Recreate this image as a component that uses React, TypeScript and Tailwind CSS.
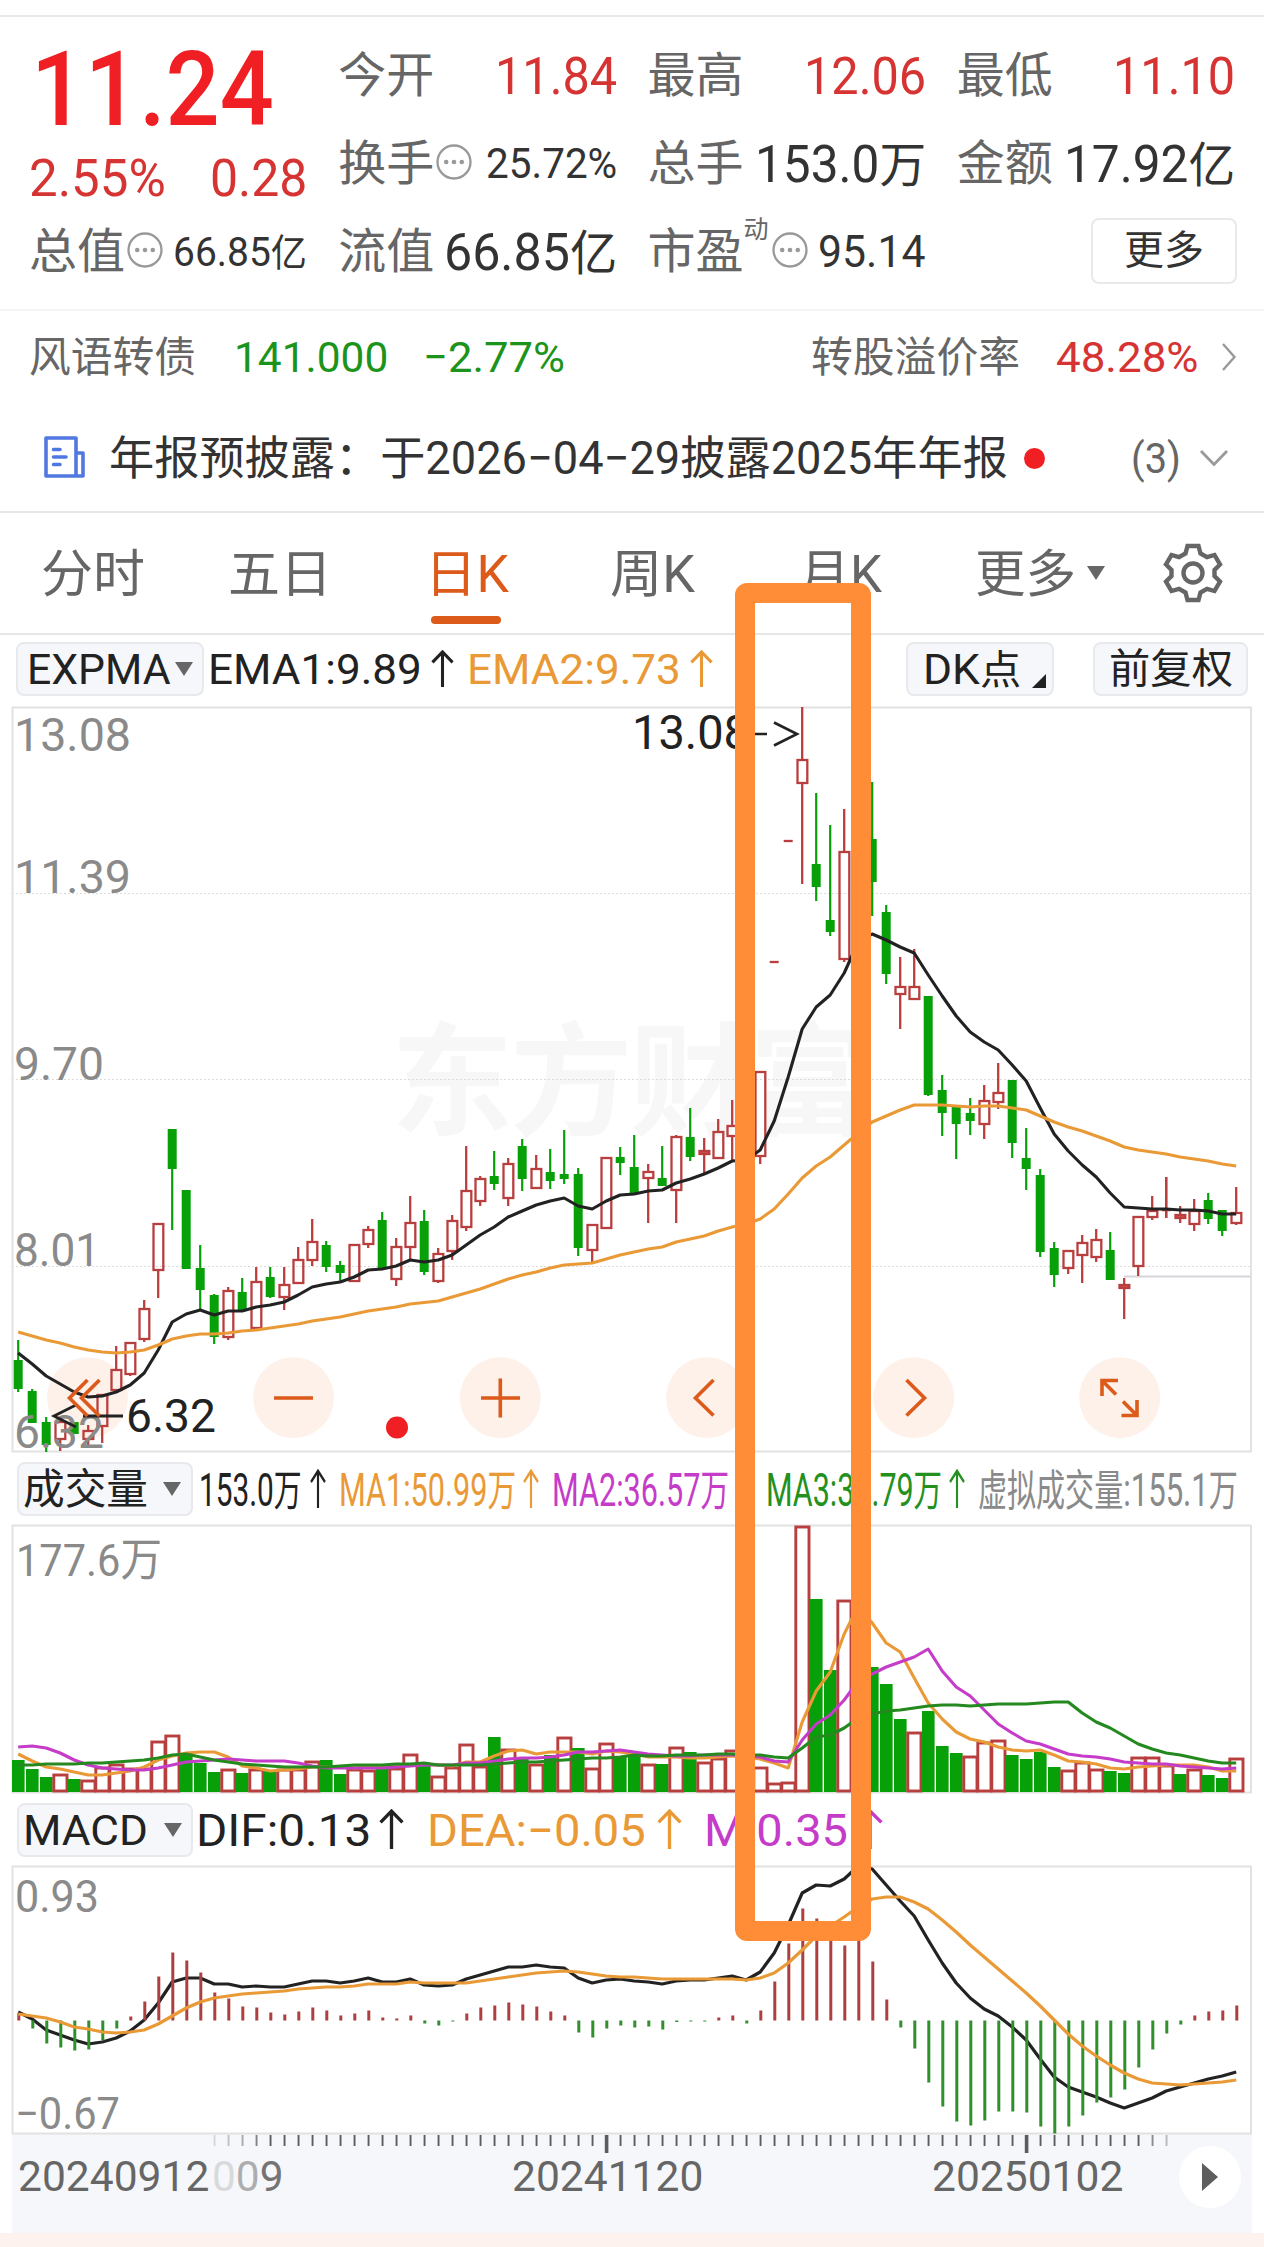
import React, { useLayoutEffect, useRef, useState } from "react";

const FONT = "font-[Roboto,'Noto_Sans_CJK_SC',sans-serif]";

/** One line of text squeezed or stretched to the width of its box. */
function Fit({ className = "", children }: { className?: string; children: React.ReactNode }) {
  const outer = useRef<HTMLSpanElement>(null);
  const inner = useRef<HTMLSpanElement>(null);
  const [scale, setScale] = useState(1);
  useLayoutEffect(() => {
    if (outer.current && inner.current) {
      setScale(outer.current.clientWidth / inner.current.offsetWidth);
    }
  }, [children]);
  return (
    <span ref={outer} className={`block shrink-0 pt-[2px] whitespace-nowrap leading-none ${className}`}>
      <span ref={inner} className="inline-block origin-left leading-none" style={{ transform: `scaleX(${scale})` }}>
        {children}
      </span>
    </span>
  );
}

const MoreDots = ({ className = "" }: { className?: string }) => (
  <svg className={`h-9 w-9 shrink-0 ${className}`} viewBox="0 0 36 36" fill="none">
    <circle cx="18" cy="18" r="16.5" stroke="#999" strokeWidth="2.3" />
    <circle cx="10.2" cy="18" r="2.3" fill="#999" />
    <circle cx="18" cy="18" r="2.3" fill="#999" />
    <circle cx="25.8" cy="18" r="2.3" fill="#999" />
  </svg>
);

const ArrowUp = ({ className = "" }: { className?: string }) => (
  <svg className={`shrink-0 ${className}`} viewBox="0 0 24 40" preserveAspectRatio="none" fill="none" stroke="currentColor" strokeWidth="3.2">
    <path d="M12 39V2M1.5 13L12 2L22.5 13" />
  </svg>
);

const Caret = ({ className = "" }: { className?: string }) => (
  <svg className={`h-[14px] w-[18px] shrink-0 ${className}`} viewBox="0 0 18 14" fill="#666">
    <path d="M0 0H18L9 14Z" />
  </svg>
);

const Gear = () => (
  <svg className="h-[62px] w-[62px]" viewBox="-31 -31 62 62" fill="none" stroke="#666" strokeWidth="4.4">
    <path d="M-5.5 -27H5.5L7.5 -19.5L14 -15.8L21.5 -18L27 -8.5L21.5 -3V3L27 8.5L21.5 18L14 15.8L7.5 19.5L5.5 27H-5.5L-7.5 19.5L-14 15.8L-21.5 18L-27 8.5L-21.5 3V-3L-27 -8.5L-21.5 -18L-14 -15.8L-7.5 -19.5Z" />
    <circle r="9.5" />
  </svg>
);

const X0 = 18.2;
const STEP = 14;
const cx = (i: number) => X0 + STEP * i;
const RED = "#b93f3f";
const GREEN = "#08a008";
const path = (ys: number[]) => ys.map((y, i) => `${i ? "L" : "M"}${cx(i).toFixed(1)} ${y}`).join("");

// [rising, high, body top, body bottom, low, filled]
type Candle = [number, number, number, number, number, number?];
const candles: (Candle | null)[] = [
  [0, 1340, 1360, 1389, 1392], [0, 1389, 1391, 1423, 1423], [0, 1417, 1422, 1445, 1452], [1, 1420, 1422, 1439, 1451],
  [0, 1422, 1422, 1434, 1434], [1, 1425, 1431, 1439, 1445], [1, 1394, 1395, 1426, 1443], [1, 1346, 1370, 1390, 1391],
  [1, 1343, 1343, 1374, 1376], [1, 1300, 1309, 1339, 1342], [1, 1224, 1224, 1270, 1298], [0, 1129, 1129, 1169, 1230],
  [0, 1190, 1190, 1269, 1269], [0, 1245, 1268, 1290, 1310], [0, 1294, 1295, 1337, 1344], [1, 1287, 1291, 1337, 1340],
  [0, 1278, 1292, 1311, 1312], [1, 1267, 1282, 1328, 1328], [0, 1267, 1277, 1297, 1298], [1, 1267, 1285, 1297, 1310],
  [1, 1247, 1260, 1283, 1283], [1, 1219, 1242, 1260, 1266], [0, 1241, 1245, 1267, 1272], [0, 1261, 1265, 1273, 1282],
  [1, 1244, 1245, 1281, 1281], [1, 1226, 1230, 1244, 1248], [0, 1212, 1220, 1269, 1269], [1, 1238, 1247, 1279, 1286],
  [1, 1196, 1223, 1247, 1260], [0, 1210, 1221, 1272, 1275], [1, 1248, 1254, 1281, 1283], [1, 1215, 1221, 1251, 1260],
  [1, 1146, 1191, 1227, 1231], [1, 1176, 1179, 1201, 1206], [0, 1151, 1176, 1184, 1190], [1, 1158, 1164, 1198, 1206],
  [0, 1139, 1146, 1179, 1191], [1, 1155, 1169, 1188, 1188], [0, 1149, 1172, 1181, 1189], [0, 1130, 1174, 1179, 1184],
  [0, 1168, 1174, 1248, 1256], [1, 1225, 1225, 1250, 1262], [1, 1158, 1158, 1228, 1228], [0, 1147, 1157, 1163, 1175],
  [0, 1135, 1167, 1194, 1194], [1, 1164, 1172, 1178, 1223], [0, 1146, 1178, 1186, 1186], [1, 1135, 1137, 1190, 1223],
  [0, 1108, 1137, 1157, 1161], [1, 1138, 1151, 1154, 1174, 1], [1, 1119, 1132, 1158, 1158], [1, 1100, 1126, 1136, 1160],
  null, [1, 1072, 1072, 1156, 1164], [1, 961, 961, 961, 961, 1], [1, 840, 840, 840, 840, 1],
  [1, 707, 760, 783, 884], [0, 793, 864, 887, 901], [0, 825, 920, 932, 936], [1, 809, 852, 959, 962],
  null, [0, 782, 839, 882, 916], [0, 905, 912, 974, 984], [1, 957, 987, 994, 1029],
  [1, 949, 987, 999, 999], [0, 996, 996, 1095, 1096], [0, 1075, 1090, 1113, 1136], [0, 1106, 1106, 1124, 1159],
  [0, 1098, 1113, 1121, 1135], [1, 1085, 1101, 1124, 1139], [1, 1063, 1093, 1102, 1109], [0, 1080, 1080, 1143, 1158],
  [0, 1128, 1158, 1169, 1190], [0, 1169, 1175, 1252, 1257], [0, 1242, 1248, 1275, 1287], [1, 1251, 1251, 1268, 1274],
  [1, 1235, 1243, 1255, 1283], [1, 1229, 1240, 1257, 1262], [0, 1232, 1250, 1280, 1280], [1, 1278, 1285, 1288, 1319, 1],
  [1, 1216, 1217, 1266, 1276], [1, 1196, 1211, 1217, 1220], [1, 1177, 1209, 1209, 1218], [1, 1206, 1215, 1218, 1223, 1],
  [1, 1199, 1211, 1224, 1231], [0, 1193, 1200, 1219, 1224], [0, 1210, 1210, 1231, 1236], [1, 1187, 1213, 1223, 1225],
];

const ema1 = [
  1353, 1364, 1376, 1384, 1392, 1397, 1396, 1392, 1385, 1373, 1350, 1322, 1314, 1310, 1315, 1311, 1311, 1307, 1305, 1302,
  1295, 1287, 1284, 1282, 1277, 1270, 1269, 1266, 1260, 1262, 1260, 1255, 1245, 1235, 1227, 1217, 1211, 1205, 1201, 1198,
  1206, 1209, 1201, 1195, 1194, 1191, 1190, 1183, 1179, 1174, 1168, 1161, 1160, 1150, 1121, 1077, 1029, 1007, 995, 973,
  942, 934, 940, 947, 953, 975, 996, 1016, 1032, 1042, 1050, 1065, 1081, 1108, 1134, 1151, 1165, 1177, 1193, 1207,
  1208, 1209, 1209, 1210, 1210, 1211, 1214, 1214,
];
const ema2 = [
  1332, 1336, 1340, 1343, 1347, 1350, 1352, 1353, 1352, 1350, 1345, 1339, 1336, 1334, 1334, 1333, 1331, 1330, 1328, 1326,
  1324, 1321, 1319, 1317, 1314, 1311, 1309, 1307, 1304, 1302.5, 1301, 1297, 1293, 1289, 1284, 1279, 1275, 1272, 1268, 1265,
  1264, 1263, 1259, 1255, 1252, 1249, 1247, 1242, 1239, 1236, 1231, 1227, 1224, 1219, 1209, 1194, 1178, 1166, 1157, 1145,
  1133, 1122, 1116, 1110, 1105, 1105, 1105, 1106, 1107, 1106, 1106, 1108, 1110, 1116, 1122, 1127, 1131, 1136, 1141, 1147,
  1150, 1152, 1154, 1157, 1159, 1161, 1164, 1166,
];

// Top edge of each volume bar; a negative value marks a falling day.
const volume = [
  -1760, -1769, -1777, 1774, -1779, 1780, 1767, 1764, 1768, 1768, 1741, 1735, -1755, -1763, -1772, 1769, -1773, 1769, -1771, 1769,
  1769, 1761, -1760, -1774, 1769, 1770, -1769, 1768, 1754, -1763, 1776, 1767, 1744, 1766, -1737, 1749, -1759, 1764, -1755, 1737,
  -1748, 1768, 1743, -1756, -1756, 1764, -1764, 1747, -1752, 1762, 1758, 1750, 1757, 1767, 1783, 1782, 1526, -1599, -1670, 1600,
  -1640, -1667, -1684, -1719, 1732, -1711, -1746, -1753, 1756, 1742, 1740, -1755, -1759, -1752, -1767, 1770, 1762, 1769, -1771, -1773,
  1757, 1757, 1765, -1774, 1769, -1775, -1778, 1758,
];
const ma1 = [
  1754, 1761, 1767, 1769, 1772, 1775, 1775, 1773, 1771, 1767, 1760, 1756, 1753, 1752, 1752, 1757, 1766, 1768, 1771, 1770,
  1769, 1767, 1767, 1767, 1768, 1767, 1767, 1766, 1765, 1764, 1765, 1766, 1762, 1762, 1756, 1751, 1750, 1754, 1752, 1752,
  1752, 1754, 1751, 1752, 1754, 1757, 1757, 1757, 1758, 1758, 1757, 1756, 1757, 1759, 1763, 1768, 1722, 1691, 1672, 1634,
  1606, 1623, 1643, 1652, 1678, 1703, 1719, 1732, 1739, 1742, 1747, 1750, 1751, 1750, 1755, 1761, 1762, 1764, 1768, 1769,
  1767, 1766, 1765, 1765, 1765, 1767, 1771, 1771,
];
const ma2 = [
  1747, 1746, 1748, 1753, 1760, 1765, 1768, 1769, 1770, 1770, 1768, 1765, 1762, 1761, 1760, 1759, 1760, 1761, 1761, 1761,
  1763, 1766, 1768, 1768, 1768, 1768, 1768, 1767, 1766, 1765, 1765, 1765, 1763, 1763, 1761, 1759, 1758, 1758, 1757, 1755,
  1752, 1752, 1751, 1750, 1752, 1754, 1755, 1756, 1756, 1755, 1755, 1755, 1756, 1757, 1761, 1762, 1740, 1724, 1715, 1700,
  1681, 1674, 1667, 1662, 1657, 1649, 1671, 1687, 1696, 1710, 1724, 1733, 1741, 1744, 1749, 1754, 1756, 1757, 1759, 1762,
  1763, 1764, 1764, 1766, 1767, 1768, 1769, 1768,
];
const ma3 = [
  1765, 1765, 1764, 1764, 1764, 1763, 1763, 1762, 1761, 1760, 1758, 1755, 1754, 1757, 1760, 1762, 1764, 1765, 1766, 1767,
  1767, 1767, 1767, 1766, 1765, 1765, 1765, 1764, 1764, 1763, 1765, 1765, 1765, 1765, 1764, 1763, 1762, 1762, 1761, 1760,
  1759, 1758, 1758, 1757, 1755, 1756, 1756, 1755, 1755, 1755, 1754, 1754, 1755, 1755, 1757, 1758, 1748, 1737, 1735, 1728,
  1718, 1714, 1711, 1710, 1708, 1706, 1705, 1705, 1706, 1705, 1704, 1704, 1704, 1703, 1702, 1702, 1713, 1722, 1728, 1736,
  1744, 1749, 1753, 1755, 1758, 1761, 1763, 1763,
];

// Histogram heights in pixels; positive is below the zero line.
const hist = [
  -7, 8, 23, 27, 30, 29, 20, 8, -4, -19, -44, -68, -60, -48, -28, -22, -14, -13, -8, -6,
  -9, -13, -10, -5, -7, -10, -3, -2, -5, 3, 5, 1, -7, -13, -15, -18, -16, -14, -9, -5,
  12, 17, 8, 5, 7, 6, 9, 1.5, 1, 1, -3, -5, 3, -10, -39, -77, -112, -102, -90, -75,
  -84, -59, -21, 7, 28, 62, 86, 101, 105, 100, 91, 91, 92, 106, 113, 106, 95, 82, 77, 69,
  47, 29, 13, 4, -5, -9, -10, -15,
];
const dif = [
  2012, 2019, 2030, 2035, 2040, 2044, 2042, 2038, 2031, 2020, 2003, 1982, 1978, 1978, 1984, 1984, 1987, 1986, 1987, 1987,
  1984, 1981, 1981, 1983, 1981, 1978, 1982, 1982, 1979, 1985, 1986, 1985, 1979, 1975, 1971, 1967, 1967, 1965, 1967, 1968,
  1978, 1983, 1980, 1979, 1981, 1982, 1984, 1981, 1980, 1980, 1978, 1976, 1980, 1972, 1953, 1925, 1893, 1885, 1886, 1879,
  1866, 1869, 1885, 1901, 1916, 1940, 1963, 1983, 1998, 2009, 2016, 2027, 2040, 2059, 2077, 2087, 2092, 2097, 2103, 2108,
  2103, 2098, 2091, 2087, 2083, 2079, 2076, 2072,
];
const dea = [
  2014, 2016, 2018, 2022, 2027, 2029, 2032, 2033, 2032, 2030, 2024, 2016, 2008, 2002, 1998, 1996, 1994, 1993, 1992, 1991,
  1989, 1988, 1987, 1987, 1986, 1984, 1984, 1984, 1982, 1983, 1983, 1983, 1983, 1981, 1979, 1977, 1975, 1973, 1972, 1971,
  1972, 1974, 1976, 1977, 1977, 1978, 1979, 1979, 1979, 1979, 1979, 1979, 1980, 1978, 1973, 1963, 1950, 1936, 1926, 1917,
  1907, 1899, 1897, 1897, 1902, 1909, 1920, 1932, 1945, 1957, 1969, 1981, 1993, 2006, 2020, 2034, 2046, 2056, 2065, 2073,
  2079, 2083, 2084, 2085, 2084, 2083, 2082, 2080,
];

const ChartLabel = ({ x, y, w, fill = "#8a8a8a", size = 46, children }: { x: number; y: number; w: number; fill?: string; size?: number; children: string }) => (
  <text x={x} y={y} textLength={w} lengthAdjust="spacingAndGlyphs" fontSize={size} fill={fill}>
    {children}
  </text>
);

function PriceChart() {
  const discs = [87.5, 293.5, 500.3, 706.7, 913.7, 1119.7];
  return (
    <svg className="block h-[754px] w-full overflow-visible" viewBox="0 702 1264 754" fill="none">
      <text x="391" y="1125" textLength="480" fontSize="122" fontWeight="700" fill="#f7f7f7">东方财富</text>
      <path d="M12 893.5H1251M12 1079.5H1251M12 1266.5H1251" stroke="#dcdcdc" strokeDasharray="2 2" />
      <rect x="12.5" y="707.5" width="1238.5" height="744" stroke="#e2e2e2" strokeWidth="2" />
      {discs.map((x) => <circle key={x} cx={x} cy="1397.7" r="40.5" fill="#fdf1e9" />)}
      <path d="M1124 1276.5H1251" stroke="#d6d6da" strokeWidth="2" />
      {candles.map((c, i) => {
        if (!c) return null;
        const [up, hi, top, bot, lo, solid] = c;
        const x = cx(i);
        if (!up)
          return (
            <g key={i} fill={GREEN}>
              <rect x={x - 1.1} y={hi} width="2.2" height={lo - hi} />
              <rect x={x - 4.5} y={top} width="9" height={bot - top} />
            </g>
          );
        return (
          <g key={i} stroke={RED} strokeWidth="2.3">
            <path d={`M${x} ${hi}V${top}M${x} ${bot}V${lo}`} />
            {bot > top ? (
              <rect x={x - 4.7} y={top} width="9.8" height={bot - top} fill={solid ? "#d95050" : "none"} />
            ) : (
              <path d={`M${x - 4.5} ${top + 1}H${x + 4.5}M${x} ${hi}V${lo}`} />
            )}
          </g>
        );
      })}
      <path d={path(ema1)} stroke="#222" strokeWidth="3.1" strokeLinejoin="round" />
      <path d={path(ema2)} stroke="#e99a36" strokeWidth="3.1" strokeLinejoin="round" />
      <ChartLabel x={14} y={750.5} w={117}>13.08</ChartLabel>
      <ChartLabel x={14} y={892.5} w={117}>11.39</ChartLabel>
      <ChartLabel x={14} y={1079.5} w={90}>9.70</ChartLabel>
      <ChartLabel x={14} y={1265.5} w={86}>8.01</ChartLabel>
      <ChartLabel x={14} y={1448} w={90}>6.32</ChartLabel>
      <ChartLabel x={632} y={749} w={118} fill="#222" size={48}>13.08</ChartLabel>
      <path d="M754 734H767M774 722.5L797 734L774 745.5" stroke="#222" strokeWidth="2.6" />
      <path d="M76 1405L54 1416L76 1427M83 1416H123" stroke="#222" strokeWidth="2.8" />
      <ChartLabel x={126} y={1431.5} w={90} fill="#222" size={47}>6.32</ChartLabel>
      <circle cx="397" cy="1427.5" r="11" fill="#f01f24" />
      <g stroke="#dc5a1a" strokeWidth="3.6">
        <path d="M87.5 1380L69.5 1398L87.5 1416M99.5 1380L81.5 1398L99.5 1416" />
        <path d="M274 1398H313M481 1398H520M500.3 1378.5V1417.5" />
        <path d="M713.5 1380L695.5 1398L713.5 1415.5" />
        <path d="M906.5 1380L924.5 1398L906.5 1415.5" />
        <path d="M1102 1396V1380.5H1118M1102 1380.5L1116 1394.5M1137 1400V1415.5H1121.5M1137 1415.5L1123 1401.5" />
      </g>
    </svg>
  );
}

function VolumeChart() {
  return (
    <svg className="block h-[276px] w-full overflow-visible" viewBox="0 1521 1264 276" fill="none">
      <rect x="12.5" y="1525.5" width="1238.5" height="267" stroke="#e2e2e2" strokeWidth="2" />
      {volume.map((v, i) =>
        v < 0 ? (
          <rect key={i} x={cx(i) - 6.2} y={-v} width="12.6" height={1792 + v} fill={GREEN} />
        ) : (
          <rect key={i} x={cx(i) - 6.4} y={v + 1} width="13.2" height={1790 - v} fill="white" stroke={RED} strokeWidth="2.9" />
        ),
      )}
      <g strokeWidth="3.1" strokeLinejoin="round">
        <path d={path(ma1)} stroke="#e99a36" />
        <path d={path(ma2)} stroke="#c43cc8" />
        <path d={path(ma3)} stroke="#24891f" />
      </g>
      <ChartLabel x={16} y={1576} w={146} size={45}>177.6万</ChartLabel>
    </svg>
  );
}

function MacdChart() {
  return (
    <svg className="block h-[272px] w-full overflow-visible" viewBox="0 1862 1264 272" fill="none">
      <rect x="12.5" y="1866.5" width="1238.5" height="267" stroke="#e2e2e2" strokeWidth="2" />
      <path d={path(dif)} stroke="#222" strokeWidth="3.2" strokeLinejoin="round" />
      {hist.map((h, i) => (
        <rect key={i} x={cx(i) - 0.9} y={h < 0 ? 2020.5 + h : 2020.5} width="3" height={Math.abs(h)} fill={h < 0 ? "#ac4040" : "#30902c"} />
      ))}
      <path d={path(dea)} stroke="#e99a36" strokeWidth="3.2" strokeLinejoin="round" />
      <ChartLabel x={15} y={1912} w={84} size={44}>0.93</ChartLabel>
      <ChartLabel x={15} y={2129} w={105} size={44}>−0.67</ChartLabel>
    </svg>
  );
}

const fade: Record<number, number> = { 14: 0.2, 15: 0.35, 16: 0.5, 17: 0.75, 81: 0.7, 82: 0.4 };

function TimeAxis() {
  return (
    <div className="mr-3 ml-3 h-[99px] bg-[#f6f7fa] text-[43px] text-[#666]">
      <svg className="block h-5 w-full" viewBox="12 2134 1240 20">
        {hist.map((_, i) => {
          if (i < 14 || i > 82) return null;
          const major = i === 42 || i === 72;
          return <rect key={i} x={cx(i) - (major ? 1.4 : 0.6)} y="2135" width={major ? 3.6 : 1.9} height={major ? 18 : 11} fill="#5c5c5c" opacity={fade[i] ?? 1} />;
        })}
      </svg>
      <div className="-mt-[1px] flex items-start">
        <Fit className="ml-[6px] w-[191px]">20240912</Fit>
        <Fit className="ml-[3px] w-[72px]">
          <span className="opacity-20">0</span>
          <span className="opacity-50">0</span>
          <span className="opacity-90">9</span>
        </Fit>
        <Fit className="ml-[228px] w-[191px]">20241120</Fit>
        <Fit className="ml-[229px] w-[191px]">20250102</Fit>
        <span className="-mt-[7px] ml-[56px] flex h-[62px] w-[62px] items-center justify-center rounded-full bg-white">
          <svg className="h-7 w-4" viewBox="0 0 16 28" fill="#5e5e5e"><path d="M0 0L16 14L0 28Z" /></svg>
        </span>
      </div>
    </div>
  );
}

const pill = "flex shrink-0 items-center rounded-lg border-2 border-[#e8e9ed] bg-[#f6f7fa]";

export default function App() {
  return (
    <div className={`relative h-[2247px] w-[1264px] overflow-hidden bg-white text-[#333] ${FONT}`}>
      {/* quote summary */}
      <section className="mt-[15px] h-[294px] border-t-2 border-[#e9eaea] pt-[14px] pr-[29px] pl-[29px]">
        <div className="grid grid-cols-4 grid-rows-[88px_88px_88px] gap-x-[31px] text-[48px]">
          <div className="row-span-2 pt-[5px]">
            <Fit className="ml-[2px] w-[243px] text-[103px] font-medium text-[#f01f24]">11.24</Fit>
            <div className="mt-[10px] flex justify-between text-[51px] text-[#d63333]">
              <Fit className="w-[137px]">2.55%</Fit>
              <Fit className="w-[97px]">0.28</Fit>
            </div>
          </div>
          <div className="flex items-center justify-between">
            <Fit className="w-[96px] text-[#666]">今开</Fit>
            <Fit className="w-[122px] text-[51px] text-[#d63333]">11.84</Fit>
          </div>
          <div className="flex items-center justify-between">
            <Fit className="w-[96px] text-[#666]">最高</Fit>
            <Fit className="w-[122px] text-[51px] text-[#d63333]">12.06</Fit>
          </div>
          <div className="flex items-center justify-between">
            <Fit className="w-[96px] text-[#666]">最低</Fit>
            <Fit className="w-[122px] text-[51px] text-[#d63333]">11.10</Fit>
          </div>
          <div className="flex items-center">
            <Fit className="w-[96px] text-[#666]">换手</Fit>
            <MoreDots className="-mt-[3px] ml-[2px]" />
            <Fit className="ml-auto w-[131px] text-[42px]">25.72%</Fit>
          </div>
          <div className="flex items-center justify-between">
            <Fit className="w-[96px] text-[#666]">总手</Fit>
            <Fit className="w-[171px] text-[51px]">153.0<span className="text-[48px]">万</span></Fit>
          </div>
          <div className="flex items-center justify-between">
            <Fit className="w-[96px] text-[#666]">金额</Fit>
            <Fit className="w-[171px] text-[51px]">17.92<span className="text-[48px]">亿</span></Fit>
          </div>
          <div className="flex items-center">
            <Fit className="w-[96px] text-[#666]">总值</Fit>
            <MoreDots className="-mt-[3px] ml-[2px]" />
            <Fit className="ml-auto w-[134px] text-[41px]">66.85<span className="text-[38px]">亿</span></Fit>
          </div>
          <div className="flex items-center justify-between">
            <Fit className="w-[96px] text-[#666]">流值</Fit>
            <Fit className="w-[173px] text-[51px]">66.85<span className="text-[48px]">亿</span></Fit>
          </div>
          <div className="flex items-center">
            <Fit className="w-[96px] text-[#666]">市盈</Fit>
            <span className="mb-11 w-[26px] text-[25px] leading-none text-[#666]">动</span>
            <MoreDots className="-mt-[3px] ml-[2px]" />
            <Fit className="ml-auto w-[108px] text-[44px]">95.14</Fit>
          </div>
          <div className="flex items-center justify-end">
            <span className="-mr-[2px] flex h-[66px] w-[146px] items-center justify-center rounded-lg border-2 border-[#e8e9eb]">
              <Fit className="-mt-[3px] w-[80px] text-[40px]">更多</Fit>
            </span>
          </div>
        </div>
      </section>

      {/* linked convertible bond */}
      <section className="flex h-[93px] items-center border-t-2 border-[#f5f5f5] pr-[27px] pl-[29px] text-[43px]">
        <Fit className="w-[167px] text-[42px] text-[#666]">风语转债</Fit>
        <Fit className="ml-[38px] w-[154px] text-[#1c941c]">141.000</Fit>
        <Fit className="ml-[35px] w-[142px] text-[#1c941c]">−2.77%</Fit>
        <Fit className="ml-auto w-[209px] text-[42px] text-[#666]">转股溢价率</Fit>
        <Fit className="ml-[36px] w-[143px] text-[#d63333]">48.28%</Fit>
        <svg className="ml-[22px] h-7 w-4" viewBox="0 0 16 28" fill="none" stroke="#999" strokeWidth="2.4">
          <path d="M2 1L13.5 14L2 27" />
        </svg>
      </section>

      {/* disclosure notice */}
      <section className="flex h-[109px] items-center pt-[1px] pr-[35px] pl-[43px]">
        <svg className="h-[44px] w-[44px] shrink-0" viewBox="0 0 44 44" fill="none" stroke="#5078e0" strokeWidth="3.6" strokeLinejoin="round" strokeLinecap="round">
          <path d="M3 3H33V41H3ZM33 18H40V41H33M10.5 14.5H17M10.5 22H23M10.5 29.5H17" />
        </svg>
        <Fit className="ml-[22px] w-[899px] text-[46px]">年报预披露：于2026−04−29披露2025年年报</Fit>
        <span className="mt-[2px] ml-[16px] h-[21px] w-[21px] shrink-0 rounded-full bg-[#f01f24]" />
        <Fit className="ml-auto w-[50px] text-[43px] text-[#666]">(3)</Fit>
        <svg className="mt-[2px] ml-[18px] h-5 w-[30px] shrink-0" viewBox="0 0 30 20" fill="none" stroke="#999" strokeWidth="2.8">
          <path d="M2 3L15 16.5L28 3" />
        </svg>
      </section>

      {/* period tabs */}
      <nav className="flex h-[122px] items-center border-t-2 border-[#e7e7e7] text-[51px] text-[#666]">
        <Fit className="ml-[41px] w-[104px]">分时</Fit>
        <Fit className="ml-[83px] w-[104px]">五日</Fit>
        <div className="relative ml-[93px] text-[#dc5a1a]">
          <Fit className="w-[84px]">日K</Fit>
          <span className="absolute top-[69px] left-[6px] h-[8px] w-[70px] rounded-full bg-[#dc5a1a]" />
        </div>
        <Fit className="ml-[101px] w-[85px]">周K</Fit>
        <Fit className="ml-[104px] w-[83px]">月K</Fit>
        <Fit className="ml-[93px] w-[101px]">更多</Fit>
        <Caret className="ml-[11px]" />
        <span className="ml-[57px]"><Gear /></span>
      </nav>

      {/* overlay indicator */}
      <section className="flex h-[69px] items-center border-t-2 border-[#e7e7e7] pl-4 text-[43px] text-[#222]">
        <span className={`${pill} h-[54px] w-[188px] pl-[9px]`}>
          <Fit className="w-[144px]">EXPMA</Fit>
          <Caret className="ml-[4px]" />
        </span>
        <Fit className="ml-[4px] w-[214px]">EMA1:9.89</Fit>
        <ArrowUp className="ml-[9px] h-[38px] w-[23px]" />
        <span className="flex items-center text-[#e99a36]">
          <Fit className="ml-[13px] w-[214px]">EMA2:9.73</Fit>
          <ArrowUp className="ml-[9px] h-[38px] w-[23px]" />
        </span>
        <span className={`${pill} ml-[193px] h-[54px] w-[148px] pl-[15px]`}>
          <Fit className="w-[98px]">DK<span className="text-[40px]">点</span></Fit>
          <svg className="mt-[25px] ml-[11px] h-[14px] w-[14px]" viewBox="0 0 14 14" fill="#222"><path d="M14 0V14H0Z" /></svg>
        </span>
        <span className={`${pill} ml-[39px] h-[54px] w-[155px] justify-center`}>
          <Fit className="w-[124px] text-[41px]">前复权</Fit>
        </span>
      </section>

      <PriceChart />

      <section className="flex h-[65px] items-center pl-[17px] text-[46px] text-[#222]">
        <span className={`${pill} h-[54px] w-[176px] pl-[4px]`}>
          <Fit className="w-[125px] text-[42px]">成交量</Fit>
          <Caret className="ml-[15px]" />
        </span>
        <Fit className="ml-[6px] w-[103px]">153.0<span className="text-[43px]">万</span></Fit>
        <ArrowUp className="ml-[8px] h-[40px] w-[16px]" />
        <span className="flex items-center text-[#e99a36]">
          <Fit className="ml-[13px] w-[177px]">MA1:50.99<span className="text-[43px]">万</span></Fit>
          <ArrowUp className="ml-[7px] h-[40px] w-[16px]" />
        </span>
        <Fit className="ml-[13px] w-[177px] text-[#c43cc8]">MA2:36.57<span className="text-[43px]">万</span></Fit>
        <span className="flex items-center text-[#24911f]">
          <Fit className="ml-[37px] w-[176px]">MA3:34.79<span className="text-[43px]">万</span></Fit>
          <ArrowUp className="ml-[7px] h-[40px] w-[16px]" />
        </span>
        <Fit className="ml-[13px] w-[260px] text-[#8a8a8a]"><span className="text-[43px]">虚拟成交量</span>:155.1<span className="text-[43px]">万</span></Fit>
      </section>

      <VolumeChart />

      <section className="flex h-[65px] items-center pl-[17px] text-[45px] text-[#222]">
        <span className={`${pill} h-[54px] w-[176px] pl-[4px]`}>
          <Fit className="w-[125px] text-[43px]">MACD</Fit>
          <Caret className="ml-[16px]" />
        </span>
        <Fit className="ml-[3px] w-[175px]">DIF:0.13</Fit>
        <ArrowUp className="ml-[8px] h-[41px] w-[25px]" />
        <span className="flex items-center text-[#e99a36]">
          <Fit className="ml-[23px] w-[219px]">DEA:−0.05</Fit>
          <ArrowUp className="ml-[11px] h-[41px] w-[25px]" />
        </span>
        <span className="flex items-center text-[#c43cc8]">
          <Fit className="ml-[22px] w-[144px]">M:0.35</Fit>
          <ArrowUp className="ml-[9px] h-[41px] w-[26px]" />
        </span>
      </section>

      <MacdChart />
      <TimeAxis />
      <div className="h-[14px] bg-[#fdf2ee]" />

      {/* highlighted breakout window */}
      <div className="absolute top-[583px] left-[735px] h-[1358px] w-[136px] rounded-[12px] border-[20px] border-[#ff8d38]" />
    </div>
  );
}
